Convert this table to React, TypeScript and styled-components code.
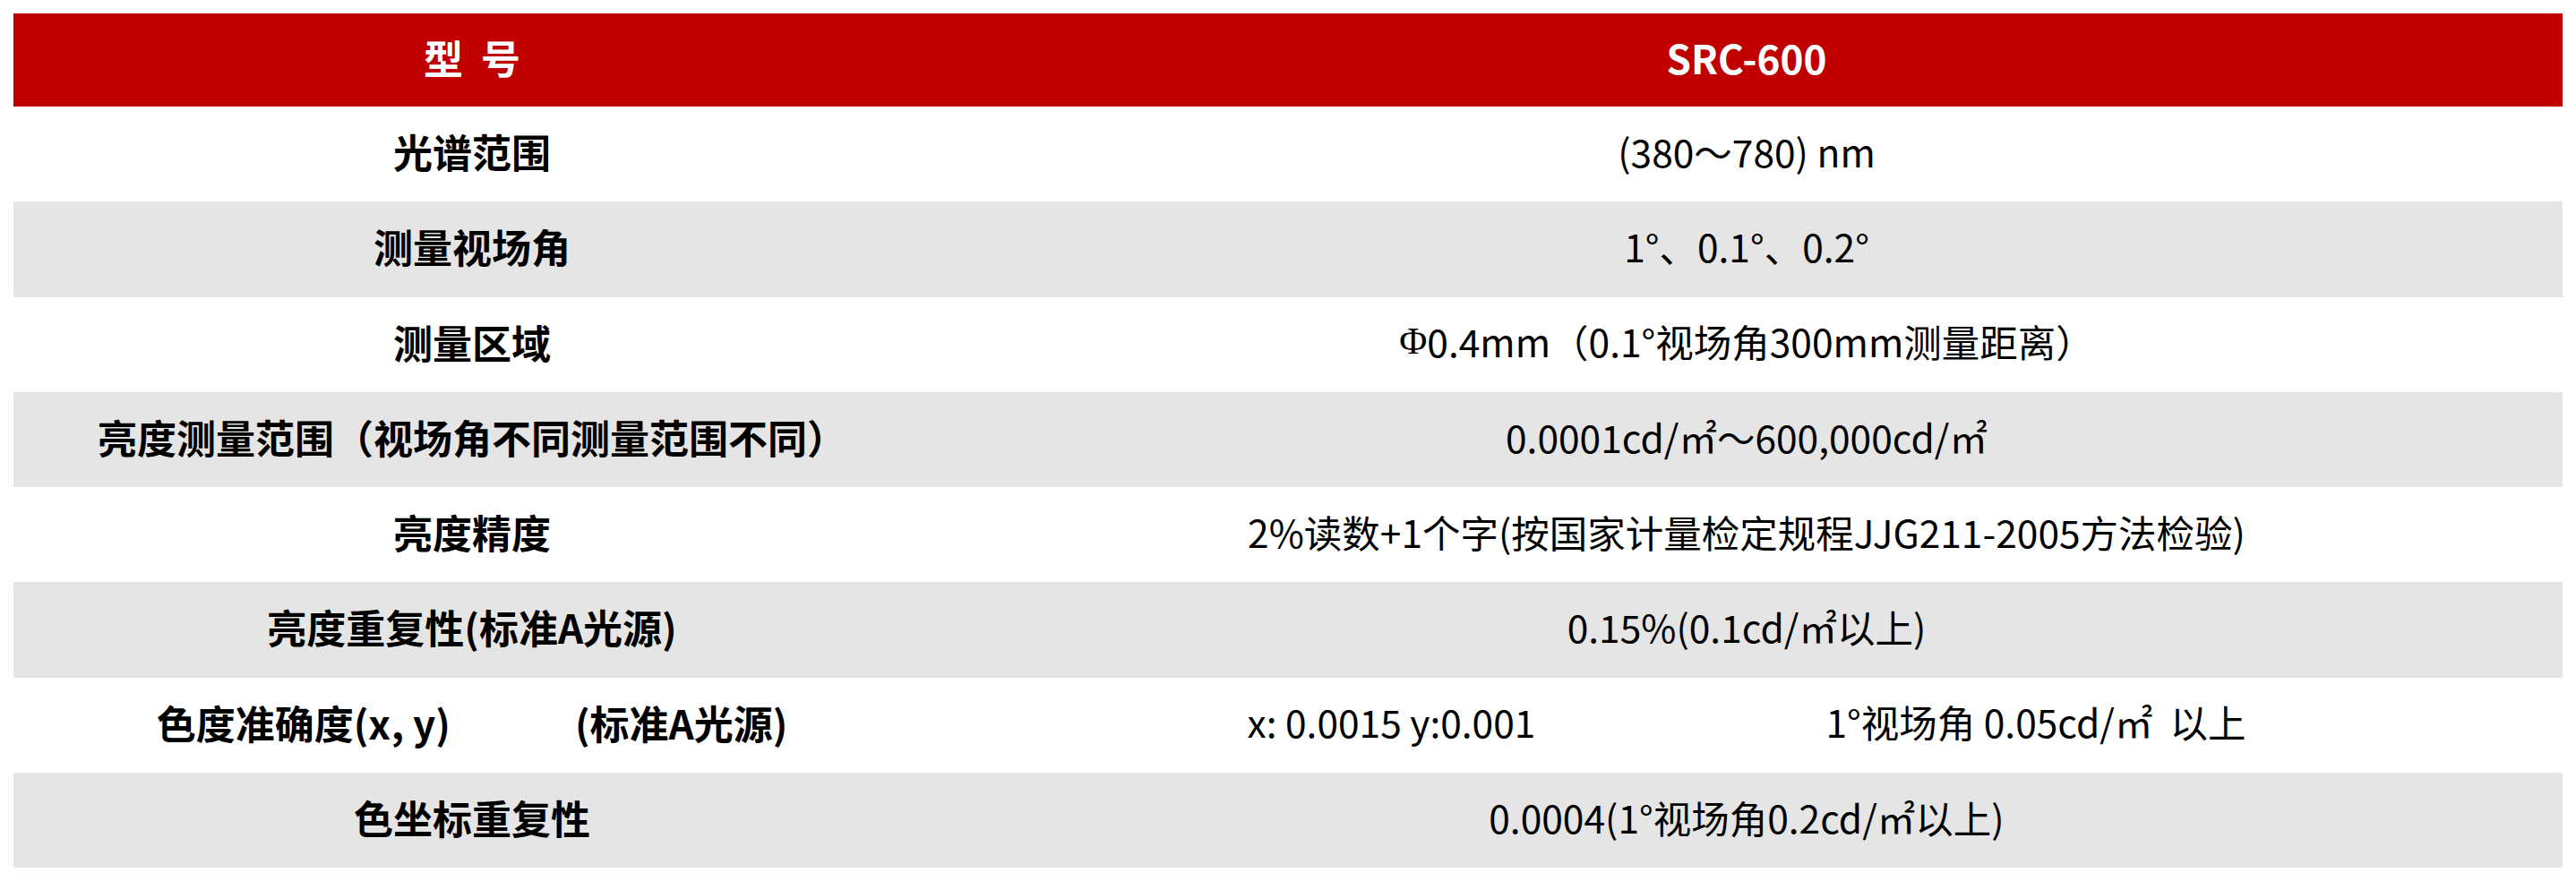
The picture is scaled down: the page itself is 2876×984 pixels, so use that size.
import React from "react";
import styled, { createGlobalStyle } from "styled-components";

const GlobalStyle = createGlobalStyle`
  html, body {
    margin: 0;
    padding: 0;
    background: #ffffff;
  }
  body {
    font-family: "Noto Sans CJK SC", "Noto Sans", sans-serif;
  }
`;

const Page = styled.div`
  padding: 15px;
  width: 2846px;
`;

const Table = styled.div`
  display: flex;
  flex-direction: column;
  width: 2846px;
`;

const Row = styled.div<{ $tone: "head" | "white" | "gray"; $h: number }>`
  display: grid;
  grid-template-columns: 1024px 1fr;
  height: ${(p) => p.$h}px;
  background: ${(p) =>
    p.$tone === "head" ? "#c00000" : p.$tone === "gray" ? "#e5e5e5" : "#ffffff"};
  color: ${(p) => (p.$tone === "head" ? "#ffffff" : "#000000")};
`;

const Cell = styled.div<{ $bold?: boolean }>`
  display: flex;
  align-items: center;
  justify-content: center;
  padding-bottom: 6px;
  font-family: "Noto Sans CJK SC", "Noto Sans", sans-serif;
  font-size: ${(p) => (p.$bold ? 44 : 42.5)}px;
  font-weight: ${(p) => (p.$bold ? 700 : 400)};
  line-height: 1;
  white-space: pre;
`;

const Split = styled.span<{ $gap: number }>`
  display: inline-flex;
  align-items: center;
  gap: ${(p) => p.$gap}px;
`;

const Phi = styled.span`
  font-family: "Liberation Serif", serif;
`;

type RowData = { label: React.ReactNode; value: React.ReactNode };

const rows: RowData[] = [
  { label: "光谱范围", value: "(380～780) nm" },
  { label: "测量视场角", value: "1°、0.1°、0.2°" },
  {
    label: "测量区域",
    value: (
      <>
        <Phi>Φ</Phi>0.4mm（0.1°视场角300mm测量距离）
      </>
    ),
  },
  { label: "亮度测量范围（视场角不同测量范围不同）", value: "0.0001cd/㎡～600,000cd/㎡" },
  { label: "亮度精度", value: "2%读数+1个字(按国家计量检定规程JJG211-2005方法检验)" },
  { label: "亮度重复性(标准A光源)", value: "0.15%(0.1cd/㎡以上)" },
  {
    label: (
      <Split $gap={139}>
        <span>色度准确度(x, y)</span>
        <span>(标准A光源)</span>
      </Split>
    ),
    value: (
      <Split $gap={324}>
        <span>x: 0.0015 y:0.001</span>
        <span>1°视场角 0.05cd/㎡  以上</span>
      </Split>
    ),
  },
  { label: "色坐标重复性", value: "0.0004(1°视场角0.2cd/㎡以上)" },
];

export default function App() {
  return (
    <>
      <GlobalStyle />
      <Page>
        <Table>
          <Row $tone="head" $h={104}>
            <Cell $bold>型  号</Cell>
            <Cell $bold>SRC-600</Cell>
          </Row>
          {rows.map((r, i) => (
            <Row key={i} $tone={i % 2 === 0 ? "white" : "gray"} $h={106.25}>
              <Cell $bold>{r.label}</Cell>
              <Cell>{r.value}</Cell>
            </Row>
          ))}
        </Table>
      </Page>
    </>
  );
}
